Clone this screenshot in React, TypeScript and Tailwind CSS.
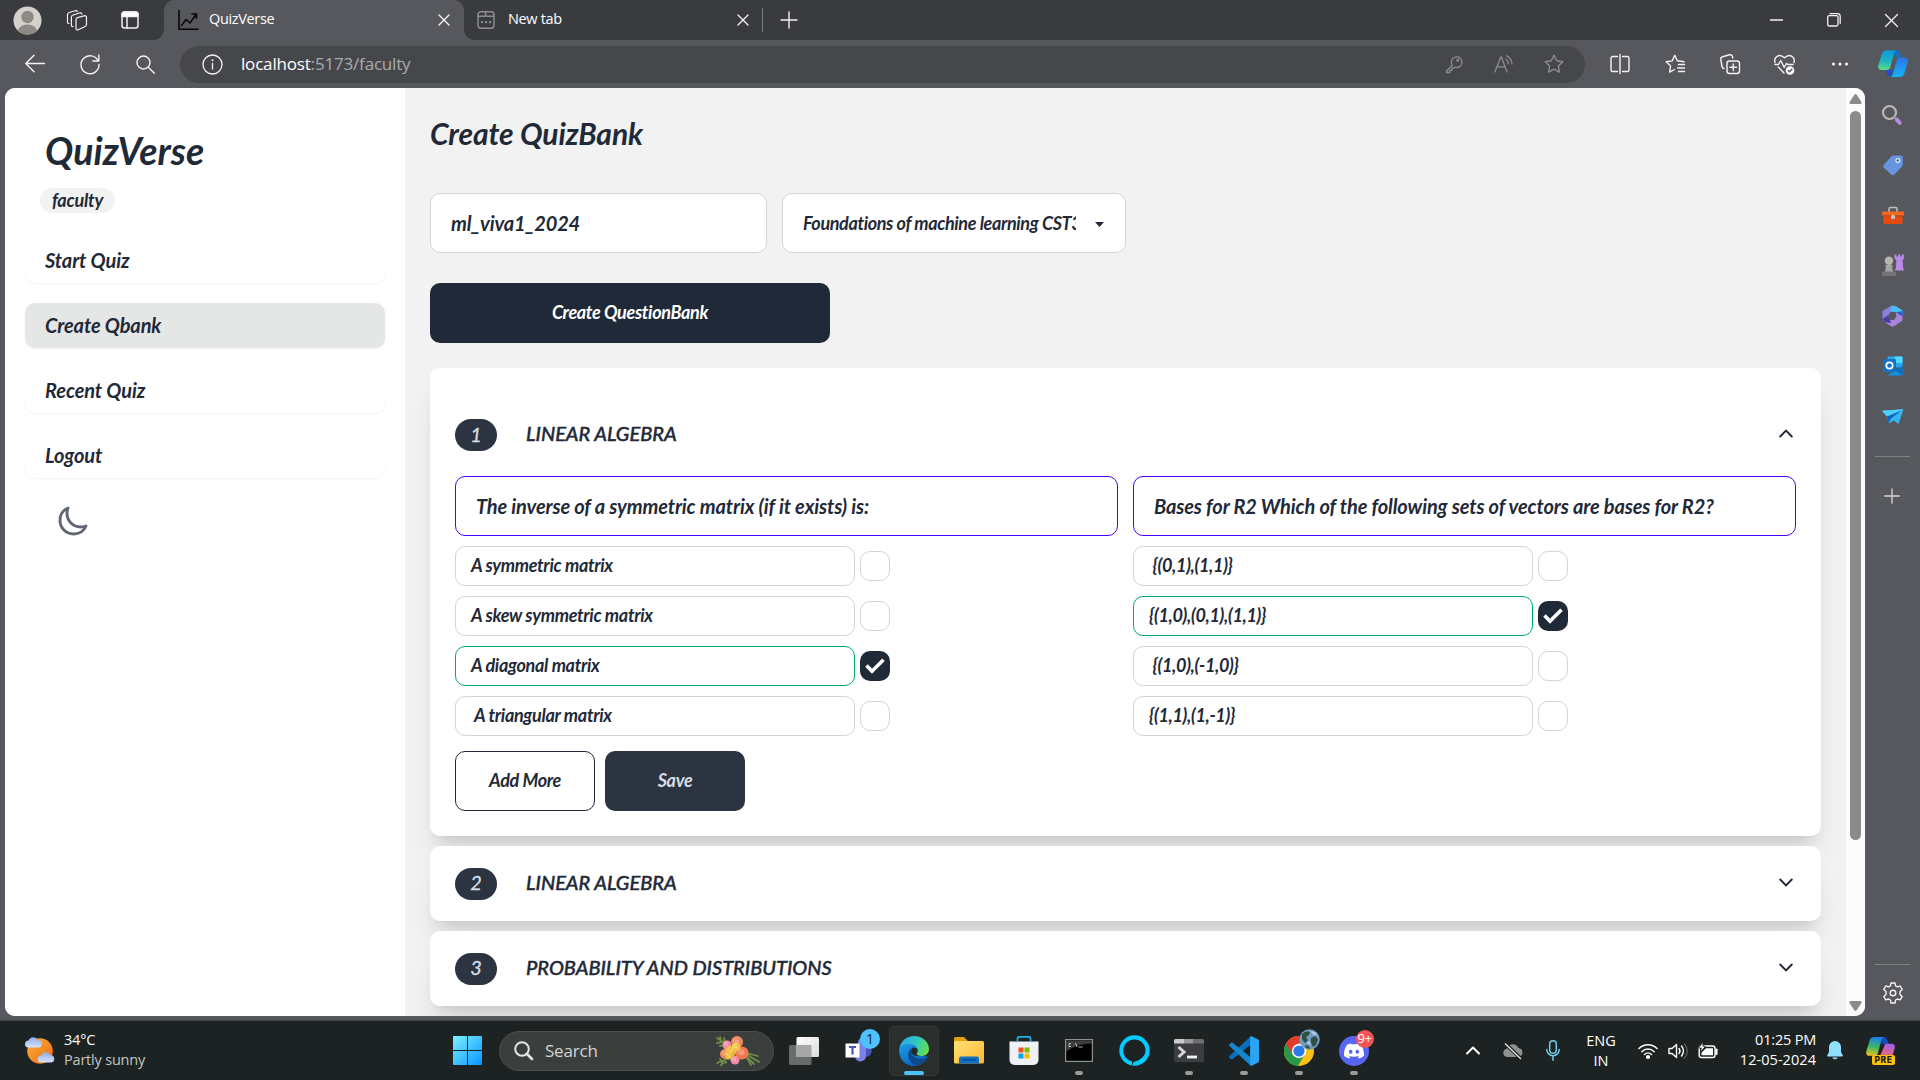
import React from 'react';
import { IoMoonOutline } from 'react-icons/io5';
import { SiDiscord } from 'react-icons/si';

type IconProps = { children: React.ReactNode; w?: number; h?: number; stroke?: string; sw?: number; vb?: string; className?: string };

function Ico({ children, w = 24, h = 24, stroke = '#f2f2f2', sw = 1.3, vb, className = '' }: IconProps) {
  return (
    <svg
      width={w}
      height={h}
      viewBox={vb ?? `0 0 ${w} ${h}`}
      fill="none"
      stroke={stroke}
      strokeWidth={sw}
      strokeLinecap="round"
      strokeLinejoin="round"
      className={`shrink-0 overflow-visible ${className}`}
    >
      {children}
    </svg>
  );
}

const CloseX = () => (
  <Ico w={12} h={12} sw={1.4}>
    <path d="M1 1l10 10M11 1L1 11" />
  </Ico>
);

/* ---------- Browser tab strip ---------- */

function TabStrip() {
  return (
    <div className="flex h-10 items-center bg-[#3a3b3e] text-[15px] text-white">
      <div className="flex h-10 w-[164px] items-center pl-[13px]">
        <svg width="29" height="29" viewBox="0 0 29 29" className="shrink-0">
          <defs>
            <clipPath id="av"><circle cx="14.500" cy="14.500" r="14" /></clipPath>
          </defs>
          <circle cx="14.500" cy="14.500" r="14" fill="#d4d0cb" />
          <g clipPath="url(#av)" fill="#8d8984">
            <circle cx="14.500" cy="11" r="6.200" />
            <ellipse cx="14.500" cy="25.500" rx="9.500" ry="7" />
          </g>
        </svg>
        <Ico w={22} h={22} sw={1.2} className="ml-[24px]">
          <path d="M11.500 8.600l6.500-1.800c1.500-.4 2.500.3 2.500 1.800v6.600c0 1.200-.6 2-1.800 2.500l-6.400 3c-1.500.6-2.300 0-2.300-1.500v-8.400c0-1.200.5-1.900 1.500-2.200z" />
          <path d="M7 17.500c-1 .2-1.600-.4-1.600-1.500V8.300c0-1.200.6-2 1.700-2.300L13.500 4c1.200-.3 2 .1 2.400 1" />
          <path d="M3 14.500c-.9.100-1.500-.5-1.500-1.500V5.800c0-1.200.6-2 1.700-2.300l6-1.800c1.200-.3 2 0 2.300 1" />
        </Ico>
        <Ico w={18} h={18} sw={1.5} className="ml-[33px]">
          <rect x="1" y="1" width="16" height="16" rx="2.500" />
          <path d="M1 3.500a2.500 2.500 0 0 1 2.500-2.500h11A2.500 2.500 0 0 1 17 3.500V5.500H1z" fill="#fff" />
          <path d="M6 5v12" />
        </Ico>
      </div>
      <div className="relative flex h-10 w-[300px] items-center rounded-t-[10px] bg-[#57585d] pl-[14px] pr-[14px]">
        <span className="absolute -left-[10px] bottom-0 h-[10px] w-[10px] bg-[radial-gradient(circle_at_0_0,#3a3b3e_9.500px,#57585d_10px)]" />
        <span className="absolute -right-[10px] bottom-0 h-[10px] w-[10px] bg-[radial-gradient(circle_at_100%_0,#3a3b3e_9.500px,#57585d_10px)]" />
        <Ico w={20} h={20} stroke="#050505" sw={1.5}>
          <path d="M1 0v19.200h19.500" strokeLinecap="butt" />
          <path d="M3.500 15.500l4.500-6 4 3.500 6-8.500M14 4h4.500v4.500" strokeLinejoin="miter" />
        </Ico>
        <span className="ml-[11px] pb-[2px] font-['Open_Sans',sans-serif] text-[14.500px] tracking-[-0.350px]">QuizVerse</span>
        <span className="ml-auto"><CloseX /></span>
      </div>
      <div className="flex h-10 w-[298px] items-center pl-[13px] pr-[13px]">
        <Ico w={18} h={18} stroke="#8f9093" sw={1.4}>
          <rect x="1" y="0.700" width="16" height="16.600" rx="3" />
          <path d="M8.500 1v2.500c0 1.200.6 1.800 1.800 1.800H17M1 5.300h7" />
          <path d="M5 11.200h.1M9 11.200h.1M13 11.200h.1" strokeWidth="2.200" />
        </Ico>
        <span className="ml-[13px] pb-[2px] font-['Open_Sans',sans-serif] text-[14.500px] tracking-[-0.350px]">New tab</span>
        <span className="ml-auto"><CloseX /></span>
      </div>
      <div className="h-6 w-px bg-[#77787b]" />
      <Ico w={18} h={18} sw={1.4} className="ml-[17px]">
        <path d="M9 1v16M1 9h16" />
      </Ico>
      <div className="ml-auto flex items-center pr-[22px]">
        <Ico w={13} h={13} sw={1.3}><path d="M0.500 6h12" /></Ico>
        <Ico w={14} h={14} sw={1.3} className="ml-[44px]">
          <rect x="0.700" y="2.700" width="10.300" height="10.300" rx="1.500" />
          <path d="M3 .6h7.500c1.600 0 2.700 1 2.700 2.700v7" />
        </Ico>
        <Ico w={13} h={13} sw={1.3} className="ml-[44px]"><path d="M.5.5l12 12M12.500.5l-12 12" /></Ico>
      </div>
    </div>
  );
}

/* ---------- Browser toolbar ---------- */

function Cell({ children, w = 'w-[55px]' }: { children: React.ReactNode; w?: string }) {
  return <div className={`flex shrink-0 items-center justify-center ${w}`}>{children}</div>;
}

const STAR = 'M10 1.200l2.700 5.600 6.100.9-4.400 4.300 1 6.100L10 15.200 4.600 18.100l1-6.100L1.200 7.700l6.100-.9z';

function CopilotLogo() {
  return (
    <svg width="30" height="28" viewBox="0 0 30 28" className="shrink-0">
      <defs>
        <linearGradient id="cp1" x1="0.300" y1="0" x2="0.200" y2="1">
          <stop offset="0" stopColor="#0a9fdc" /><stop offset=".5" stopColor="#1cb0c4" /><stop offset="1" stopColor="#5bdc8a" />
        </linearGradient>
        <linearGradient id="cp2" x1="0.500" y1="0" x2="0.500" y2="1">
          <stop offset="0" stopColor="#2a74e8" /><stop offset="1" stopColor="#18b4fb" />
        </linearGradient>
      </defs>
      <path d="M14 0h4.500c2.200 0 3.300 1.800 4 4.200l1 3.300h-6z" fill="#1570b8" />
      <path d="M8 20h7l-2 6.600c-2.600 0-3.800-1.600-4.300-3.600z" fill="#1a4fd0" />
      <path d="M8.500.5H19c-2 .4-2.700 2-3.400 4.500l-3.200 12c-.6 2-1.500 3-3.500 3H3.500C.8 20-.3 18 .4 15.200L3.700 4.300C4.400 1.800 6 .5 8.500.5z" fill="url(#cp1)" />
      <path d="M21.300 7.500h5c2.800 0 4.200 1.900 3.400 4.700l-3.300 11c-.8 2.500-2.300 3.800-4.900 3.800H12.500c1.700-.6 2.200-1.800 2.900-4.200l3.200-12c.5-2 1.300-3.300 2.700-3.300z" fill="url(#cp2)" />
    </svg>
  );
}

function Toolbar() {
  return (
    <div className="flex h-12 items-center bg-[#57585d]">
      <div className="flex w-[180px] items-center pl-[25px]">
        <Ico w={20} h={20} sw={1.4}><path d="M19.500 9.500H1M9 1.200L.8 9.500 9 17.800" /></Ico>
        <Ico w={20} h={20} sw={1.4} className="ml-[35px]"><path d="M18.200 7A9 9 0 1 0 19 10.500M18.800 1v6h-6" /></Ico>
        <Ico w={19} h={19} sw={1.4} className="ml-[36px]"><circle cx="7.500" cy="7.500" r="6.500" /><path d="M12.300 12.300l6 6" /></Ico>
      </div>
      <div className="flex h-[37px] w-[1405px] items-center rounded-full bg-[#46474b] pl-[22px] pr-[6px]">
        <Ico w={21} h={21} sw={1.3}><circle cx="10.500" cy="10.500" r="9.500" /><path d="M10.500 9.500v5.500" /><path d="M10.500 6.200v.1" strokeWidth="2" /></Ico>
        <span className="ml-[18px] pb-[1px] font-['Open_Sans',sans-serif] text-[17px] tracking-[-0.180px] text-white">
          localhost<span className="text-[#a9aaad]">:5173/faculty</span>
        </span>
        <div className="ml-auto flex">
          <Cell w="w-[50px]">
            <Ico w={18} h={18} stroke="#8c8d90" sw={1.3}>
              <path d="M7.300 10.200L1.500 16v1.500h3.300v-2.200h2.200v-2.200h1.700l1-1A5.300 5.300 0 1 0 7.300 10.200z" /><circle cx="12.800" cy="5.200" r=".9" />
            </Ico>
          </Cell>
          <Cell w="w-[50px]">
            <Ico w={20} h={18} stroke="#8c8d90" sw={1.3}>
              <path d="M.8 17L6.800 2h.6L13 17M3 11.800h8.200M11.800 4.200c1.700 1 2.500 2.500 2.600 4.700M12.500.800c3.600 1.500 5.300 4.300 5.500 8.200" />
            </Ico>
          </Cell>
          <Cell w="w-[50px]"><Ico w={20} h={20} stroke="#8c8d90" sw={1.4}><path d={STAR} /></Ico></Cell>
        </div>
      </div>
      <div className="flex items-center pl-[7px]">
        <Cell>
          <Ico w={20} h={20} sw={1.4}><path d="M7.500 2.500H3A2 2 0 0 0 1 4.500v11a2 2 0 0 0 2 2h4.500M12.500 2.500H17a2 2 0 0 1 2 2v11a2 2 0 0 1-2 2h-4.500M10 .5v19" /></Ico>
        </Cell>
        <Cell>
          <Ico w={20} h={20} sw={1.4}><path d="M12.300 6.800L9.800 1.300 7.200 6.900l-6 .9 4.400 4.200-1 6.200 4.900-2.700M12.300 6.800l6.800 1M13.500 10.500h6M12.500 14h7M13.500 17.500h6" /></Ico>
        </Cell>
        <Cell>
          <Ico w={20} h={20} sw={1.4}>
            <rect x="7" y="7" width="12.500" height="12.500" rx="2.500" /><path d="M13.250 10v6.500M10 13.250h6.500M4 14.500c-1.200-.2-1.800-.9-2-2L.8 5.300c-.2-1.500.4-2.300 1.800-2.600l7-1.900c1.600-.3 2.500.3 2.900 1.700l.3 1.500" />
          </Ico>
        </Cell>
        <Cell>
          <Ico w={21} h={20} sw={1.4}>
            <path d="M1 8.500C-.5 3.500 5-1.500 10.500 3.800 16-1.500 21.500 3.500 20 8.500M4.300 13l5.700 6M1 10.500h3.500l2.300-4 3.400 7 2.300-4.200 1.200 1.200h5.500" />
            <circle cx="16" cy="16.500" r="4.300" fill="#fff" stroke="none" /><path d="M14.200 16.600l1.300 1.200 2.400-2.600" stroke="#57585d" />
          </Ico>
        </Cell>
        <Cell>
          <svg width="18" height="4" viewBox="0 0 18 4" fill="#fff"><circle cx="2.500" cy="2" r="1.500" /><circle cx="9" cy="2" r="1.500" /><circle cx="15.500" cy="2" r="1.500" /></svg>
        </Cell>
        <Cell w="w-[52px]"><CopilotLogo /></Cell>
      </div>
    </div>
  );
}

/* ---------- Browser side rail ---------- */

function SideRail() {
  const cell = 'flex h-[50.250px] w-[55px] items-center justify-center';
  return (
    <div className="flex w-[55px] flex-col bg-[#57585d] pt-[2px]">
      <div className={`${cell} pr-[1px]`}>
        <svg width="22" height="22" viewBox="0 0 22 22" fill="none">
          <circle cx="8.500" cy="8.500" r="6.500" stroke="#b9b9b7" strokeWidth="2.200" />
          <path d="M12.800 12.800l2.500 2.500" stroke="#999" strokeWidth="2" />
          <path d="M15.800 15.600l3 3.200" stroke="#b78be8" strokeWidth="4" strokeLinecap="round" />
        </svg>
      </div>
      <div className={cell}>
        <svg width="22" height="22" viewBox="0 0 22 22">
          <path d="M11.500 1.500h7c1.500 0 2.300.8 2.300 2.300v6.500c0 1-.3 1.700-1 2.400l-7.500 7.800c-1 .9-2 .9-3 0l-7.500-6.800c-.9-1-.9-2 0-3l7.500-8.200c.6-.7 1.300-1 2.200-1z" fill="#6795e2" />
          <circle cx="15.800" cy="6.500" r="2.500" fill="#dce9f8" /><circle cx="15.800" cy="6.500" r="1.200" fill="#4d5f80" />
        </svg>
      </div>
      <div className={cell}>
        <svg width="22" height="19" viewBox="0 0 22 19">
          <path d="M7 6V3c0-1 .5-1.500 1.500-1.500h5c1 0 1.500.5 1.500 1.500v3" stroke="#bfc3c4" strokeWidth="1.500" fill="none" />
          <path d="M1.500 8h19v8.500c0 1-.5 1.500-1.500 1.500H3c-1 0-1.500-.5-1.500-1.500z" fill="#e34c10" />
          <rect x="0" y="5.500" width="22" height="4.300" rx="1" fill="#f26a22" />
          <path d="M1 9.800h20" stroke="#a83a10" strokeWidth=".8" />
          <circle cx="11" cy="11" r="2.200" fill="#c4c6c4" />
        </svg>
      </div>
      <div className={cell}>
        <svg width="22" height="23" viewBox="0 0 22 23">
          <path d="M12.500.5h2v2h1.700v-2h2v2h1.700v-2h2v4l-1.300 1.700.6 8 1 2.300h-9.500l1.200-2.300.5-8-1.900-1.700z" fill="#b98ae6" />
          <circle cx="7" cy="6.800" r="4.200" fill="#b5b5b2" />
          <path d="M3 11h8l-1 2 1.200 5h-8.400L4 13z" fill="#a5a5a2" />
          <rect x="0" y="17.500" width="14" height="4.500" rx="1.500" fill="#767674" />
        </svg>
      </div>
      <div className={cell}>
        <svg width="21" height="22" viewBox="0 0 21 22">
          <path d="M6.500 2.300L10 .5l4 2-5 3.500-1.500 8L2 17 .5 14V6z" fill="#8b7fe0" />
          <path d="M10 .5l3 .3 7.500 4.500v6l-6.500-4-6-.8z" fill="#45bff0" />
          <path d="M20.500 8v7.500L13 20.800l-3 .9-7.500-4.500 5.500-2 6-4.500V7z" fill="#a883dc" />
          <path d="M14 7.500l6.500 4V6z" fill="#2a5cc4" /><path d="M.5 14l2.500 3.500 6 .5-1.500-4-1-4z" fill="#4a3fa0" />
          <path d="M8 7.200l4.500-.2 2 4-2.500 4H8l-2-4z" fill="#57585d" />
        </svg>
      </div>
      <div className={cell}>
        <svg width="20" height="20" viewBox="0 0 20 20">
          <path d="M5.500.5h13c.6 0 1 .4 1 1v10h-15v-10c0-.6.400-1 1-1z" fill="#28a8ea" /><path d="M12 .5h6.500c.6 0 1 .4 1 1V7H12z" fill="#50d9ff" />
          <path d="M4 19.500L19.500 10v8.500c0 .6-.4 1-1 1z" fill="#1490df" /><path d="M12 14.500l7.500 5V10z" fill="#0c6cbd" />
          <rect x="0" y="3" width="13" height="13" rx="1.200" fill="#0f73cc" />
          <circle cx="6.500" cy="9.500" r="3.200" fill="none" stroke="#fff" strokeWidth="1.700" />
        </svg>
      </div>
      <div className={cell}>
        <svg width="22" height="16" viewBox="0 0 22 16">
          <path d="M0 1.800L21.500.300 16.500 15l-5-3.500L7 14.500 5 7.500z" fill="#35b5ee" />
          <path d="M0 1.800L21.500.300 5 7.500z" fill="#4fd0fa" /><path d="M5 7.500L19 1.800 8.300 10 7 14.500z" fill="#0a66b8" />
        </svg>
      </div>
      <div className="ml-[10px] mt-[14px] h-px w-[35px] bg-[#808185]" />
      <div className="mt-[31px] flex justify-center pr-[1px]">
        <Ico w={16} h={16} stroke="#d8d8da" sw={1.3}><path d="M8 .8v14.400M.8 8h14.400" /></Ico>
      </div>
      <div className="ml-[10px] mt-auto h-px w-[35px] bg-[#808185]" />
      <div className="mb-[16px] mt-[17px] flex justify-center">
        <Ico w={22} h={22} sw={1.4} vb="0 0 22 22">
          <path d="M9 1h4l.6 2.900 1.800 1 2.800-.9 2 3.400L18 9.500v2.900l2.200 2-2 3.500-2.800-.9-1.800 1L13 21H9l-.6-3-1.800-1-2.800.9-2-3.500 2.200-2V9.500l-2.200-2.100 2-3.400 2.800.9 1.800-1z" />
          <circle cx="11" cy="11" r="2.800" />
        </Ico>
      </div>
    </div>
  );
}

/* ---------- QuizVerse application ---------- */

const NAV = ['Start Quiz', 'Create Qbank', 'Recent Quiz', 'Logout'];

function AppSidebar() {
  return (
    <aside className="flex w-[400px] shrink-0 flex-col bg-white px-5">
      <div className="mt-[40px] pl-5 text-[37.500px] font-bold leading-[45px] tracking-[0.050px]">QuizVerse</div>
      <div className="ml-[15px] mt-[15px] flex h-[25px] w-[75px] items-center justify-center rounded-full bg-[#f2f2f2] pb-[1px] text-[18px] font-bold leading-[24px] tracking-[-0.200px]">
        faculty
      </div>
      <nav className="mt-[25px] flex flex-col gap-5">
        {NAV.map((n) => (
          <div
            key={n}
            className={`flex h-[45px] items-center rounded-[10px] pb-[2px] pl-5 text-[20px] font-bold tracking-[-0.100px] shadow-[0_1px_2px_rgba(0,0,0,0.06)] ${n === 'Create Qbank' ? 'bg-[#e5e6e6]' : 'bg-white'}`}
          >
            {n}
          </div>
        ))}
      </nav>
      <IoMoonOutline size={32} className="ml-[32px] mt-[27px] text-[#5f6773] [&_path]:[stroke-width:46px]" />
    </aside>
  );
}

type Option = { text: string; ok?: boolean };
const QUESTIONS: { q: string; options: Option[] }[] = [
  {
    q: 'The inverse of a symmetric matrix (if it exists) is:',
    options: [{ text: 'A symmetric matrix' }, { text: 'A skew symmetric matrix' }, { text: 'A diagonal matrix', ok: true }, { text: ' A triangular matrix' }],
  },
  {
    q: 'Bases for R2 Which of the following sets of vectors are bases for R2?',
    options: [{ text: ' {(0,1),(1,1)}' }, { text: '{(1,0),(0,1),(1,1)}', ok: true }, { text: ' {(1,0),(-1,0)}' }, { text: '{(1,1),(1,-1)}' }],
  },
];

function OptionRow({ o }: { o: Option }) {
  return (
    <div className="flex items-center gap-[5px]">
      <div className={`flex h-10 w-[400px] items-center whitespace-pre rounded-[10px] border bg-white pb-[1px] pl-[15px] text-[18px] font-bold tracking-[-0.320px] ${o.ok ? 'border-[#00a96e]' : 'border-[#d2d4d7]'}`}>
        {o.text}
      </div>
      {o.ok ? (
        <div className="flex h-[30px] w-[30px] items-center justify-center rounded-[10px] bg-[#1f2937]">
          <svg width="20" height="16" viewBox="0 0 20 16" fill="none" stroke="#fff" strokeWidth="3.600"><path d="M1.500 7.500l5.500 5.700L18.500 1.800" /></svg>
        </div>
      ) : (
        <div className="h-[30px] w-[30px] rounded-[10px] border border-[#d2d4d7] bg-white" />
      )}
    </div>
  );
}

function TopicHeader({ n, title, open = false }: { n: number; title: string; open?: boolean }) {
  return (
    <div className="flex h-8 items-center">
      <div className="flex h-8 w-[42px] items-center justify-center rounded-full bg-[#2b3440] pb-[3px] text-[20px] leading-none text-[#d7dde4] [-webkit-text-stroke:0.300px]">{n}</div>
      <div className="ml-[29px] pb-[4px] text-[20px] font-medium leading-none tracking-[-0.020px] [-webkit-text-stroke:0.450px]">{title}</div>
      <svg width="14" height="9" viewBox="0 0 14 9" fill="none" stroke="#1f2937" strokeWidth="1.900" strokeLinecap="round" className="mb-[3px] ml-auto mr-[3px]">
        <path d={open ? 'M1.200 7.500L7 1.700l5.800 5.800' : 'M1.200 1.500L7 7.300l5.800-5.800'} />
      </svg>
    </div>
  );
}

const CARD = 'shrink-0 rounded-[10px] bg-white px-[25px] shadow-[0_25px_31px_-6px_rgba(0,0,0,0.1),0_10px_12.500px_-7.500px_rgba(0,0,0,0.1)]';

function MainArea() {
  return (
    <main className="flex h-full w-[1441px] shrink-0 flex-col overflow-hidden bg-[#f2f2f2] pl-[25px] pr-[25px]">
      <h1 className="mt-[26px] text-[30px] font-bold leading-[38px] tracking-[-0.120px]">Create QuizBank</h1>
      <div className="mt-[41px] flex gap-[15px]">
        <div className="flex h-[60px] w-[337px] items-center rounded-[10px] border border-[#d2d4d7] bg-white pl-5 text-[20px] font-bold tracking-[-0.150px]">ml_viva1_2024</div>
        <div className="flex h-[60px] w-[344px] items-center rounded-[10px] border border-[#d2d4d7] bg-white pl-5 text-[18px] font-bold tracking-[-0.380px]">
          <span className="w-[273px] overflow-hidden whitespace-nowrap">Foundations of machine learning CST383</span>
          <svg width="9" height="5" viewBox="0 0 9 5" className="ml-[19px] mt-[2px]"><path d="M0 0h9L4.500 5z" fill="#1f2937" /></svg>
        </div>
      </div>
      <div className="mt-[30px] flex h-[60px] w-[400px] shrink-0 items-center justify-center rounded-[10px] bg-[#1f2937] pb-[1px] text-[18px] font-bold tracking-[-0.350px] text-white">
        Create QuestionBank
      </div>
      <section className="mt-[25px] flex flex-col gap-[10px]">
        <div className={`${CARD} h-[468px] pt-[51px]`}>
          <TopicHeader n={1} title="LINEAR ALGEBRA" open />
          <div className="mt-[25px] grid grid-cols-2 gap-[15px]">
            {QUESTIONS.map((q) => (
              <div key={q.q} className="flex flex-col gap-[10px]">
                <div className="flex h-[60px] items-center rounded-[10px] border border-[#4a00ff] pl-5 text-[20px] font-bold tracking-[-0.140px]">{q.q}</div>
                {q.options.map((o) => <OptionRow key={o.text} o={o} />)}
              </div>
            ))}
          </div>
          <div className="mt-[15px] flex gap-[10px] text-[18px] font-bold tracking-[-0.350px]">
            <div className="flex h-[60px] w-[140px] items-center justify-center rounded-[10px] border border-[#1f2937] pb-[1px]">Add More</div>
            <div className="flex h-[60px] w-[140px] items-center justify-center rounded-[10px] bg-[#2b3440] pb-[1px] text-[#d7dde4]">Save</div>
          </div>
        </div>
        <div className={`${CARD} flex h-[75px] flex-col justify-center`}><TopicHeader n={2} title="LINEAR ALGEBRA" /></div>
        <div className={`${CARD} flex h-[75px] flex-col justify-center`}><TopicHeader n={3} title="PROBABILITY AND DISTRIBUTIONS" /></div>
      </section>
    </main>
  );
}

function ScrollBar() {
  return (
    <div className="flex w-[19px] shrink-0 flex-col items-center bg-[#fcfcfc] pb-[5px] pt-[6px]">
      <svg width="13" height="10" viewBox="0 0 13 10"><path d="M5.300.8Q6.500-.6 7.700.8L12.600 8.200Q13 9.800 11.500 10H1.500Q0 9.800.4 8.200z" fill="#8b8b8b" /></svg>
      <div className="mt-[7px] h-[729px] w-[11px] rounded-full bg-[#8b8b8b]" />
      <svg width="13" height="10" viewBox="0 0 13 10" className="mt-auto"><path d="M5.300 9.200Q6.500 10.600 7.700 9.200L12.600 1.800Q13 .2 11.500 0H1.500Q0 .2.4 1.800z" fill="#8b8b8b" /></svg>
    </div>
  );
}

/* ---------- Windows taskbar ---------- */

function TaskIcon({ children, run = false }: { children: React.ReactNode; run?: boolean }) {
  return (
    <div className="relative flex h-[50px] w-[55px] shrink-0 items-center justify-center">
      {children}
      {run && <span className="absolute bottom-[1px] left-[23.500px] h-1 w-2 rounded-full bg-[#9a9c9b]" />}
    </div>
  );
}

function Bouquet() {
  const flowers: [number, number, number, string][] = [
    [22, 7, 6, '#f58a5c'], [12, 10, 4.5, '#f78fb0'], [10, 19, 5, '#f58a5c'], [20, 25, 4.500, '#f78fb0'], [27, 18, 6.5, '#f47c50'], [16, 16, 5.500, '#f2bf33'], [21, 12, 4, '#f8d24e'], [14, 21, 3.5, '#f6cb45'],
  ];
  return (
    <svg width="46" height="32" viewBox="0 0 46 32" className="shrink-0">
      <g stroke="#6f8f47" strokeWidth="1.800" strokeLinecap="round" fill="none">
        <path d="M2 3l12 8M5 2l1 4M9 3l1 4M2 8l5-1M5 11l5-1M2 28l10-4M5 24l2 3M10 23l1 5M6 30l3-3" />
        <path d="M30 20l9 9M31 19l13 8M31 18l12 3M31 21l5 9" />
      </g>
      {flowers.map(([x, y, r, c]) => (
        <g key={`${x}-${y}`}>
          <circle cx={x} cy={y} r={r} fill={c} />
          <circle cx={x - 1} cy={y - 1} r={r * 0.5} fill="#fff" opacity="0.250" />
          <circle cx={x + 0.5} cy={y + 0.5} r={r * 0.6} fill="none" stroke="#b8452a" strokeWidth=".6" opacity="0.350" />
        </g>
      ))}
    </svg>
  );
}

function EdgeLogo() {
  return (
    <svg width="30" height="30" viewBox="0 0 30 30">
      <defs>
        <linearGradient id="eg1" x1="0" y1="0.300" x2="1" y2="0.600"><stop offset="0" stopColor="#2aa7e6" /><stop offset=".5" stopColor="#2ec6c4" /><stop offset="1" stopColor="#66e04c" /></linearGradient>
        <linearGradient id="eg2" x1="0" y1="0" x2="0.600" y2="1"><stop offset="0" stopColor="#1da0ea" /><stop offset="1" stopColor="#0b63c0" /></linearGradient>
      </defs>
      <path d="M.1 14C.5 8 6 5.500 10.500 6c5 .5 8 3.500 8.200 8 0 2-.9 2.700-1.200 3.500-.3 1.300 1.500 2.500 5 2.500l6.300.5C26.500 26 21.500 30 15 30 6.500 30 0 23.500.1 14z" fill="url(#eg2)" />
      <path d="M.4 12.500C1.500 5 7.500 0 15 0c8.500 0 15 6 15 13 0 4.500-3.500 7-7.500 7-3.500 0-5.300-1.200-5-2.500.3-.8 1.200-1.500 1.200-3.500 0-3-3-6-8-6C6 8 2 9.800.4 12.500z" fill="url(#eg1)" />
      <path d="M12.500 12c-2.500 2-4 5.500-3 9.500 1.200 4.500 5.500 8 8.500 8.200 4.500-1 8-3.700 10.300-7.500.3-.6-.3-.9-.8-.6-1.700.8-3.500 1.200-5.500 1.200-5.500 0-10-3-10-7.300 0-1.200.2-2.500.5-3.500z" fill="#114a8b" />
      <path d="M13.500 11.800c2-.8 4.500.2 5.200 2.200 0 2-.9 2.700-1.200 3.500-.3 1.300.8 2 3 2.400-3.800.6-8-.9-8.300-4.400 0-1.400.4-2.800 1.300-3.700z" fill="#222827" />
    </svg>
  );
}

function TaskBar() {
  return (
    <div className="flex h-[60px] items-center border-t border-[#3e4241] bg-[#1d2322] font-['Open_Sans',sans-serif] text-[14.500px] text-white">
      <div className="flex w-[453px] shrink-0 items-center pl-[25px]">
        <svg width="30" height="29" viewBox="0 0 30 29" className="shrink-0">
          <defs>
            <linearGradient id="sun" x1="0" y1="0" x2="1" y2="1"><stop offset="0" stopColor="#f8b43c" /><stop offset="1" stopColor="#f0690f" /></linearGradient>
            <linearGradient id="cld" x1="0" y1="0" x2="0" y2="1"><stop offset="0" stopColor="#8fadea" /><stop offset="1" stopColor="#d5e2fa" /></linearGradient>
          </defs>
          <circle cx="15" cy="15" r="12.800" fill="url(#sun)" />
          <path d="M3.500 11.500a3.500 3.500 0 0 1 0-7 5.200 5.200 0 0 1 9.500-.5 3.800 3.800 0 0 1 .8 7.500z" fill="url(#cld)" />
          <path d="M16 26.500a3.500 3.500 0 0 1 0-7 5.200 5.200 0 0 1 9.500-.5 3.800 3.800 0 0 1 .8 7.500z" fill="url(#cld)" />
        </svg>
        <div className="ml-[9px] pb-[2px] leading-[20px] tracking-[-0.200px]">
          <div>34°C</div>
          <div className="text-[#c4c5c5]">Partly sunny</div>
        </div>
      </div>
      <svg width="29" height="29" viewBox="0 0 29 29" className="shrink-0">
        <defs><linearGradient id="win" x1="0" y1="0" x2="1" y2="1"><stop offset="0" stopColor="#7df1ff" /><stop offset="1" stopColor="#0a95ff" /></linearGradient></defs>
        <path d="M1 0h13v14H0V1a1 1 0 0 1 1-1zM15 0h13a1 1 0 0 1 1 1v13H15zM0 15h14v14H1a1 1 0 0 1-1-1zM15 15h14v13a1 1 0 0 1-1 1H15z" fill="url(#win)" />
      </svg>
      <div className="ml-[17px] flex h-10 w-[275px] shrink-0 items-center rounded-full border border-[#4b4f4e] bg-[#3a3f3e] pl-[14px] pr-[12px]">
        <Ico w={19} h={19} stroke="#e4e5e5" sw={2}><circle cx="8" cy="8" r="6.800" /><path d="M13 13l5 5" strokeWidth="2.600" /></Ico>
        <span className="ml-[12px] text-[17px] tracking-[-0.200px] text-[#d2d4d4]">Search</span>
        <span className="ml-auto"><Bouquet /></span>
      </div>
      <div className="ml-[2.500px] flex items-center">
        <TaskIcon>
          <svg width="30" height="28" viewBox="0 0 30 28">
            <defs><linearGradient id="tv" x1="0" y1="0" x2="1" y2="1"><stop offset="0" stopColor="#fff" /><stop offset="1" stopColor="#dadada" /></linearGradient></defs>
            <rect x="0" y="8" width="22.500" height="20" rx="1.500" fill="#6a6b6b" />
            <rect x="7.500" y="0" width="22.500" height="20" rx="1.500" fill="url(#tv)" />
            <rect x="7.500" y="8" width="15" height="12" fill="#a6a7a7" />
          </svg>
        </TaskIcon>
        <TaskIcon>
          <svg width="28" height="36" viewBox="0 0 28 36">
            <path d="M17 10h9.500v8.500a5.500 5.500 0 0 1-7 5.200z" fill="#4b53bc" />
            <circle cx="17" cy="9.500" r="4" fill="#7b83eb" />
            <path d="M10 23.500a5.500 5.500 0 0 0 11-1V12H10z" fill="#7b83eb" />
            <rect x="0.500" y="10.500" width="14" height="14" fill="#fff" />
            <path d="M4 14h7M7.500 14v7.500" stroke="#4b53bc" strokeWidth="2.200" />
          </svg>
          <span className="absolute left-[28.500px] top-[3px] flex h-5 w-5 items-center justify-center rounded-full bg-[#4cc2ff] text-[14px] leading-none text-[#10242e]">1</span>
        </TaskIcon>
        <div className="relative flex h-[50px] w-[55px] items-center justify-center">
          <div className="flex h-[50px] w-[50px] items-center justify-center rounded-[5px] border border-[#343938] bg-[#2a2f2e]"><EdgeLogo /></div>
          <span className="absolute bottom-[1px] left-[17.500px] h-1 w-5 rounded-full bg-[#4cc2ff]" />
        </div>
        <TaskIcon>
          <svg width="30" height="27" viewBox="0 0 30 27">
            <defs><linearGradient id="fd" x1="0" y1="0" x2="1" y2="1"><stop offset="0" stopColor="#ffe07a" /><stop offset="1" stopColor="#fdb92c" /></linearGradient></defs>
            <path d="M0 1.500A1.500 1.500 0 0 1 1.500 0H10l3.500 3.500V8H0z" fill="#e2a10d" />
            <rect x="0" y="4" width="30" height="22.500" rx="1.500" fill="url(#fd)" />
            <path d="M5 26.500v-5a2 2 0 0 1 2-2h16a2 2 0 0 1 2 2v5z" fill="#0f70c4" /><path d="M9 22.800h12" stroke="#0a4b8e" strokeWidth="1.500" strokeLinecap="round" />
          </svg>
        </TaskIcon>
        <TaskIcon>
          <svg width="30" height="29" viewBox="0 0 30 29">
            <path d="M.5 5.500h29V24a5 5 0 0 1-5 5h-19a5 5 0 0 1-5-5z" fill="#f0f1f2" />
            <path d="M8.500 6V2.200A1.300 1.300 0 0 1 9.800.9h10.400a1.300 1.300 0 0 1 1.300 1.300V6" fill="none" stroke="#1cb1ea" strokeWidth="1.700" />
            <path d="M9.500 11.500h5v5h-5z" fill="#f25022" /><path d="M15.500 11.500h5v5h-5z" fill="#7fba00" /><path d="M9.500 17.500h5v5h-5z" fill="#00a4ef" /><path d="M15.500 17.500h5v5h-5z" fill="#ffb900" />
          </svg>
        </TaskIcon>
        <TaskIcon run>
          <svg width="28" height="23" viewBox="0 0 28 23">
            <rect x=".6" y=".6" width="26.800" height="21.800" fill="#000" stroke="#8f9294" strokeWidth="1.200" />
            <path d="M1 1.500h26v3C16 5 6 8 1 13z" fill="#3a3c3d" />
            <path d="M6 4.500H4v3h2M8.500 5h.2M8.500 7.200h.2M10.500 4l1.500 4M13.500 8h4" stroke="#c8c8c8" strokeWidth=".9" fill="none" />
          </svg>
        </TaskIcon>
        <TaskIcon>
          <svg width="31" height="31" viewBox="0 0 31 31">
            <circle cx="15.500" cy="15.500" r="15.200" fill="#05caff" />
            <path d="M15.500 4.500A11 11 0 0 0 13 26.300v3l.6 1.500.8-3.800C22 25 26.500 21 26.500 15.500a11 11 0 0 0-11-11z" fill="#1d2322" />
          </svg>
        </TaskIcon>
        <TaskIcon run>
          <svg width="30" height="23" viewBox="0 0 30 23">
            <rect width="30" height="23" rx="1.500" fill="#3c3d40" />
            <path d="M1.500 0H10v4.500H0v-3A1.500 1.500 0 0 1 1.500 0z" fill="#ccc" /><path d="M10 0h9.500v4.500H10z" fill="#9a9a9a" /><path d="M19.500 0h9A1.500 1.500 0 0 1 30 1.500v3H19.500z" fill="#6f6f70" />
            <path d="M4.500 8l5.500 5-5.500 5" stroke="#d6d6d6" strokeWidth="3" fill="none" /><path d="M13 18h10" stroke="#f4f4f4" strokeWidth="2.800" />
          </svg>
        </TaskIcon>
        <TaskIcon run>
          <svg width="30" height="30" viewBox="0 0 30 30">
            <path d="M22 0v8.500L3.500 23.200c-.6.4-1.200.3-1.700-.1L.4 21.800c-.5-.6-.5-1.300 0-1.800z" fill="#0a70bd" />
            <path d="M22 30v-8.500L3.500 6.800c-.6-.4-1.200-.3-1.700.1L.4 8.200c-.5.600-.5 1.300 0 1.800z" fill="#1487cf" />
            <path d="M22 0l6.800 3.200c.8.400 1.200 1 1.200 1.900v19.800c0 .9-.4 1.500-1.200 1.900L22 30c-.9-.5-.9-1-.9-1.900V1.900C21.100 1 21.200.5 22 0z" fill="#2aa5f4" />
          </svg>
        </TaskIcon>
        <TaskIcon run>
          <svg width="30" height="30" viewBox="0 0 30 30">
            <circle cx="15" cy="15" r="15" fill="#fbc116" />
            <path d="M15 15L2 7.500A15 15 0 0 0 14 30l6.500-11.200z" fill="#279847" />
            <path d="M2 7.500A15 15 0 0 1 28 7.500H15L8.500 18.700z" fill="#e33b2e" />
            <circle cx="15" cy="15" r="7.200" fill="#fff" /><circle cx="15" cy="15" r="5.600" fill="#2a7be8" />
          </svg>
          <svg width="21" height="21" viewBox="0 0 21 21" className="absolute left-[27px] top-[3px]">
            <circle cx="10.500" cy="10.500" r="10.200" fill="#6f9cc0" />
            <path d="M3 5c3-3 6-3 8-2l-1 3-3 2 2 3-3 3-3-4zM12 9l4-2 3 3-2 6-3 2-2-4zM6 16l4 1 1 3-4-1z" fill="#2f4f44" />
            <path d="M11 2l5 1 2 3-3 0zM9 12l3 2-1 2-3-2z" fill="#d3e2ea" opacity=".7" />
          </svg>
        </TaskIcon>
        <TaskIcon run>
          <div className="flex h-[30px] w-[30px] items-center justify-center rounded-full bg-[#5865f2]"><SiDiscord size={20} color="#fff" /></div>
          <span className="absolute left-[29px] top-[4px] flex h-[18px] w-[18px] items-center justify-center rounded-full bg-[#f25558] text-[13px] leading-none tracking-[-0.500px] text-white">9+</span>
        </TaskIcon>
      </div>
      <div className="ml-auto flex items-center pr-[25px]">
        <Ico w={14} h={9} sw={1.900} stroke="#fff"><path d="M1 7.500l6-6 6 6" /></Ico>
        <svg width="20" height="18" viewBox="0 0 20 18" className="ml-[23px]">
          <path d="M4 15a4.200 4.200 0 0 1-.3-8.300A6.300 6.300 0 0 1 15.500 6 4.600 4.600 0 0 1 16 15z" fill="#8d9190" />
          <path d="M1.500 1l17 16" stroke="#1d2322" strokeWidth="3.500" /><path d="M2 1.500l16 15.500" stroke="#e8e8e8" strokeWidth="1.300" />
        </svg>
        <Ico w={14} h={21} stroke="#75cbe8" sw={1.500} className="ml-[23px]">
          <rect x="3.700" y=".8" width="6.600" height="12.400" rx="3.300" /><path d="M.8 9.500a6.200 6.200 0 0 0 12.400 0M7 16v4.200" />
        </Ico>
        <div className="ml-[26px] w-[30px] text-center leading-[20px] tracking-[0px]">ENG<br />IN</div>
        <Ico w={20} h={16} stroke="#fff" sw={1.500} className="ml-[22px]">
          <path d="M1 5.500a12.700 12.700 0 0 1 18 0M3.800 8.700a8.700 8.700 0 0 1 12.400 0M6.500 11.500a5 5 0 0 1 7 0" /><circle cx="10" cy="14" r="1.300" fill="#fff" />
        </Ico>
        <Ico w={20} h={16} stroke="#fff" sw={1.400} className="ml-[10px]">
          <path d="M1 5.500h3L8.500 1.500v13L4 10.500H1zM11 5.500a4 4 0 0 1 0 5M13.500 3a7.500 7.500 0 0 1 0 10" /><path d="M16.500 1a10.500 10.500 0 0 1 0 14" stroke="#5a5e5d" />
        </Ico>
        <svg width="21" height="17" viewBox="0 0 21 17" className="ml-[10px]" fill="none">
          <rect x="1.200" y="4" width="15.800" height="11.500" rx="2.300" stroke="#fff" strokeWidth="1.400" /><path d="M8 6.200h7v7H3.500v-2.500z" fill="#fff" />
          <path d="M18.500 7.500v4.500" stroke="#fff" strokeWidth="2.200" strokeLinecap="round" /><path d="M5 0L.5 6h2.800L2.500 10 7.500 4.300H4.800z" fill="#fff" stroke="#1d2322" strokeWidth=".8" />
        </svg>
        <div className="ml-[17px] w-[80px] whitespace-nowrap pb-[2px] text-right leading-[20px]">
          <div className="tracking-[-0.200px]">01:25 PM</div>
          <div className="flex justify-end tracking-[0.050px]">12-05-2024</div>
        </div>
        <svg width="16" height="19" viewBox="0 0 16 19" className="ml-[11px]" fill="#8fe0ff">
          <path d="M8 0a6 6 0 0 1 6 6v5l1.800 3.300c.3.700 0 1.200-.7 1.200H.9c-.7 0-1-.5-.7-1.200L2 11V6a6 6 0 0 1 6-6zM5.300 16.500h5.400a2.800 2.500 0 0 1-5.400 0z" />
        </svg>
        <div className="relative ml-[23px] h-[29px] w-[29px]">
          <svg width="29" height="28" viewBox="0 0 30 28">
            <defs>
              <linearGradient id="pp1" x1=".4" y1="0" x2=".2" y2="1"><stop offset="0" stopColor="#1d7fe8" /><stop offset=".5" stopColor="#3cb66a" /><stop offset="1" stopColor="#f0c31a" /></linearGradient>
              <linearGradient id="pp2" x1=".7" y1="0" x2=".3" y2="1"><stop offset="0" stopColor="#a05df0" /><stop offset="1" stopColor="#f56a6a" /></linearGradient>
            </defs>
            <path d="M14 .5h4.500c2 0 3 1.500 3.700 3.500l1.500 4h-7z" fill="#1a49b5" />
            <path d="M8.500.5H19c-2 .4-2.700 2-3.400 4.500l-3.200 12c-.6 2-1.500 3-3.500 3H3.500C.8 20-.3 18 .4 15.200L3.700 4.300C4.400 1.800 6 .5 8.500.5z" fill="url(#pp1)" />
            <path d="M21.300 7.500h5c2.800 0 4.200 1.900 3.400 4.700l-2.500 8H14.500l4.100-9.400c.5-2 1.300-3.300 2.700-3.300z" fill="url(#pp2)" />
          </svg>
          <span className="absolute bottom-0 left-[6px] flex h-[10px] w-[23px] items-center justify-center rounded-[2px] bg-[#ffc20e] font-['Inter',sans-serif] text-[8.500px] font-extrabold leading-none tracking-[0.500px] text-[#1a1a1a]">PRE</span>
        </div>
      </div>
    </div>
  );
}

export default function App() {
  return (
    <div className="flex h-[1080px] w-[1920px] flex-col overflow-hidden bg-[#57585d]">
      <TabStrip />
      <Toolbar />
      <div className="flex h-[932px]">
        <div className="ml-[5px] flex h-[928px] w-[1860px] overflow-hidden rounded-[10px] bg-white font-['Lato',sans-serif] italic text-[#1f2937]">
          <AppSidebar />
          <MainArea />
          <ScrollBar />
        </div>
        <SideRail />
      </div>
      <TaskBar />
    </div>
  );
}
